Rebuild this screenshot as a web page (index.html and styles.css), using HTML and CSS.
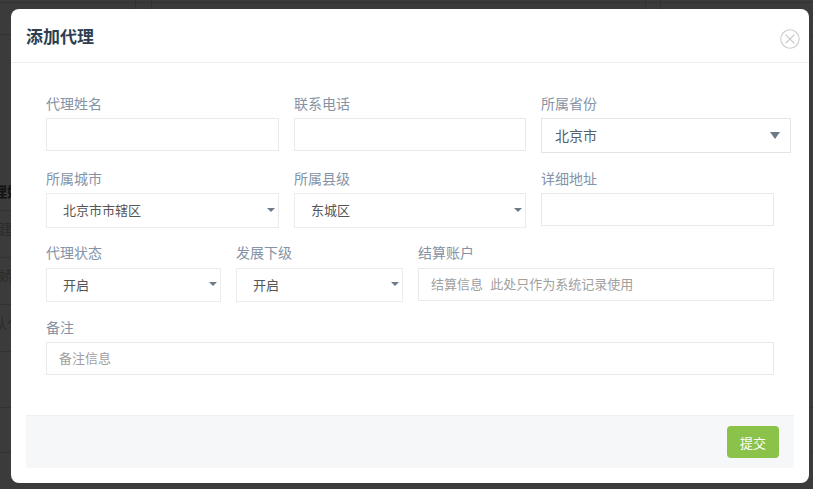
FILE: index.html
```html
<!DOCTYPE html>
<html lang="zh-CN">
<head>
<meta charset="utf-8">
<title>添加代理</title>
<link rel="stylesheet" href="styles.css">
</head>
<body>
<div class="backdrop">
  <div class="bg-line bg-line-top"></div>
  <div class="bg-line bg-line-v1"></div>
  <div class="bg-line bg-line-v2"></div>
  <div class="bg-line bg-line-v3"></div>
  <div class="bg-line bg-line-v4"></div>
  <div class="bg-line bg-line-h1"></div>
  <div class="bg-line bg-line-h2"></div>
  <div class="bg-line bg-line-h3"></div>
  <div class="bg-line bg-line-h4"></div>
  <div class="bg-line bg-line-h5"></div>
  <div class="bg-line bg-line-h6"></div>
  <div class="bg-line bg-line-h7"></div>
  <div class="bg-line bg-line-r1"></div>
  <div class="bg-line bg-line-r2"></div>
  <div class="bg-line bg-line-r3"></div>
  <span class="bg-text bg-text-1">理姓</span>
  <span class="bg-text bg-text-2">建</span>
  <span class="bg-text bg-text-3">娇</span>
  <span class="bg-text bg-text-4">认亻</span>
</div>
<div class="modal">
  <header class="modal-head">
    <h1 class="modal-title">添加代理</h1>
    <button class="close" type="button" aria-label="关闭">
      <svg width="20" height="20" viewBox="0 0 20 20"><circle cx="10" cy="10" r="9.2" fill="none" stroke="#cdcdcd" stroke-width="1.1"/><path d="M5.6 5.6 14.4 14.4M14.4 5.6 5.6 14.4" fill="none" stroke="#c4c4c4" stroke-width="1.1"/></svg>
    </button>
  </header>
  <form class="modal-body">
    <div class="row row-3">
      <label class="field"><span class="lab">代理姓名</span><input class="ctl" type="text"></label>
      <label class="field"><span class="lab">联系电话</span><input class="ctl" type="text"></label>
      <label class="field"><span class="lab">所属省份</span><span class="sel sel-wide"><select class="ctl-sel"><option>北京市</option></select></span></label>
    </div>
    <div class="row row-3">
      <label class="field"><span class="lab">所属城市</span><span class="sel"><select class="ctl-sel"><option>北京市市辖区</option></select></span></label>
      <label class="field"><span class="lab">所属县级</span><span class="sel"><select class="ctl-sel"><option>东城区</option></select></span></label>
      <label class="field"><span class="lab">详细地址</span><input class="ctl" type="text"></label>
    </div>
    <div class="row row-mix">
      <label class="field"><span class="lab lab-tall">代理状态</span><span class="sel sel-short"><select class="ctl-sel"><option>开启</option></select></span></label>
      <label class="field"><span class="lab lab-tall">发展下级</span><span class="sel sel-short"><select class="ctl-sel"><option>开启</option></select></span></label>
      <label class="field"><span class="lab lab-tall">结算账户</span><input class="ctl" type="text" placeholder="结算信息  此处只作为系统记录使用"></label>
    </div>
    <div class="row row-1">
      <label class="field"><span class="lab">备注</span><input class="ctl" type="text" placeholder="备注信息"></label>
    </div>
  </form>
  <footer class="modal-foot"><button class="submit" type="button">提交</button></footer>
</div>
</body>
</html>
```
FILE: styles.css
```css
html, body { margin: 0; padding: 0; height: 100%; }
body {
  width: 813px; height: 489px; overflow: hidden; position: relative;
  background: #3b3b3b;
  font-family: "Liberation Sans", "Noto Sans CJK SC", sans-serif;
  padding: 9px 0 0 11px; box-sizing: border-box;
}
.backdrop { position: absolute; inset: 0; overflow: hidden; }
.bg-line { position: absolute; background: #333; }
.bg-line-top { left: 0; top: 2px; width: 813px; height: 1px; }
.bg-line-v1 { left: 135px; top: 0; width: 1px; height: 9px; }
.bg-line-v2 { left: 151px; top: 0; width: 1px; height: 9px; }
.bg-line-v3 { left: 645px; top: 0; width: 1px; height: 9px; }
.bg-line-v4 { left: 660px; top: 0; width: 1px; height: 9px; }
.bg-line-h1 { left: 0; top: 34px; width: 11px; height: 1px; }
.bg-line-h2 { left: 0; top: 210px; width: 11px; height: 1px; }
.bg-line-h3 { left: 0; top: 257px; width: 11px; height: 1px; }
.bg-line-h4 { left: 0; top: 304px; width: 11px; height: 1px; }
.bg-line-h5 { left: 0; top: 351px; width: 11px; height: 1px; }
.bg-line-h6 { left: 0; top: 407px; width: 11px; height: 1px; }
.bg-line-h7 { left: 0; top: 452px; width: 11px; height: 1px; }
.bg-line-r1 { left: 809px; top: 36px; width: 4px; height: 1px; }
.bg-line-r2 { left: 809px; top: 407px; width: 4px; height: 1px; }
.bg-line-r3 { left: 809px; top: 452px; width: 4px; height: 1px; }
.bg-text { position: absolute; font-size: 14px; line-height: 16px; color: #2b2b2b; white-space: nowrap; }
.bg-text-1 { left: -7px; top: 184px; font-weight: 700; color: #111; }
.bg-text-2 { left: -1px; top: 221px; }
.bg-text-3 { left: -1px; top: 268px; }
.bg-text-4 { left: -7px; top: 315px; }
.modal {
  position: relative; width: 798px; height: 474px; background: #fff;
  border-radius: 8px; display: flex; flex-direction: column;
}
.modal-head {
  height: 53px; border-bottom: 1px solid #eeeeee; box-sizing: content-box;
  display: flex; align-items: flex-start; justify-content: space-between;
  padding-left: 15px;
}
.modal-title {
  margin: 17px 0 0; font-size: 17px; line-height: 24px; font-weight: 700; color: #2c3e50;
}
.close { border: 0; background: none; padding: 0; margin: 20px 9px 0 0; width: 20px; height: 20px; display: block; line-height: 0; }
.modal-body { padding: 31px 0 0 35px; height: 352px; box-sizing: border-box; }
.row { display: grid; column-gap: 15px; width: 728px; height: 75px; }
.row-3 { grid-template-columns: 233px 232px 233px; }
.row-mix { grid-template-columns: 175px 167px 356px; margin-top: -1px; }
.row-1 { grid-template-columns: 728px; }
.field { display: block; }
.lab { display: block; font-size: 14px; line-height: 20px; height: 24px; color: #8593a5; }
.lab-tall { height: 25px; }
.ctl {
  display: block; width: 100%; height: 33px; box-sizing: border-box;
  border: 1px solid #e9e9e9; background: #fff; outline: 0; border-radius: 0;
  padding: 0 12px; font: 13px/31px "Liberation Sans", "Noto Sans CJK SC", sans-serif; color: #555;
}
.ctl::placeholder { color: #a0a0a0; opacity: 1; }
.sel { display: block; position: relative; height: 35px; }
.sel-short { height: 34px; }
.sel::after {
  content: ""; position: absolute; right: 4px; top: 15px;
  border-style: solid; border-width: 4.5px 4.5px 0 4.5px;
  border-color: #6d7a87 transparent transparent transparent;
}
.sel-short::after { top: 14px; }
.sel-wide { width: 250px; }
.sel-wide::after { right: 11px; top: 14px; border-width: 7px 5px 0 5px; }
.ctl-sel {
  display: block; width: 100%; height: 100%; box-sizing: border-box;
  appearance: none; -webkit-appearance: none; background: #fff; outline: 0; border-radius: 0;
  border: 1px solid #ececec; padding: 0 16px;
  font: 13px "Liberation Sans", "Noto Sans CJK SC", sans-serif; color: #555;
}
.sel-wide .ctl-sel { border: 1px solid #e2e4ea; padding: 0 13px; font-size: 14px; color: #555e68; }
.modal-foot {
  margin: 0 15px; height: 53px; box-sizing: border-box;
  background: #f6f7f9; border-top: 1px solid #f0f0f3; border-radius: 0 0 3px 3px;
  display: flex; justify-content: flex-end; align-items: flex-start;
  padding: 10px 15px 0 0;
}
.submit {
  width: 52px; height: 32px; border: 0; border-radius: 4px; background: #8bc34a; color: #fff;
  font: 13px "Liberation Sans", "Noto Sans CJK SC", sans-serif; padding: 0;
}
```
